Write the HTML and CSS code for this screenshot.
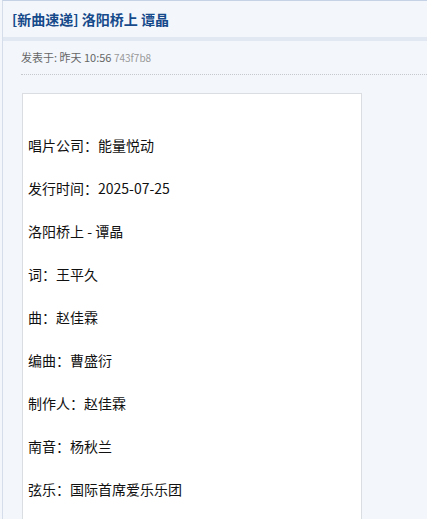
FILE: index.html
```html
<!DOCTYPE html>
<html>
  <head>
    <meta name="viewport" content="width=device-width, initial-scale=1.0" />
    <title>洛阳桥上 谭晶</title>
    <link rel="stylesheet" href="styles.css">
  </head>
  <body>
    <div class="page">
      <div class="thread-title">
        <h1>[新曲速递] 洛阳桥上 谭晶</h1>
      </div>
      <div class="post">
        <div class="post-meta">
          发表于: 昨天 10:56 <span class="post-id">743f7b8</span>
        </div>
        <div class="post-body">
          <p>唱片公司：能量悦动</p>
          <p>发行时间：2025-07-25</p>
          <p>洛阳桥上 - 谭晶</p>
          <p>词：王平久</p>
          <p>曲：赵佳霖</p>
          <p>编曲：曹盛衍</p>
          <p>制作人：赵佳霖</p>
          <p>南音：杨秋兰</p>
          <p>弦乐：国际首席爱乐乐团</p>
        </div>
      </div>
    </div>
  </body>
</html>
```

FILE: styles.css
```css
body {
  margin: 0;
  background: #f3f7fc;
  font-family: "Noto Sans CJK SC", "Noto Sans", sans-serif;
  overflow: hidden;
}

.page {
  margin-left: 2px;
  border-left: 1px solid #d5dcea;
  border-top: 1px solid #c5d1e4;
  height: 518px;
  overflow: hidden;
}

.thread-title {
  height: 36px;
  display: flex;
  align-items: center;
  padding-left: 9px;
  border-bottom: 4px solid #e2e8f2;
}

.thread-title h1 {
  margin: 0;
  font-size: 14px;
  font-weight: bold;
  color: #164a8a;
}

.post {
  padding-left: 18px;
}

.post-meta {
  font-size: 11px;
  color: #666;
  padding: 8px 0 9px 0;
  border-bottom: 1px dotted #c4c9d0;
}

.post-id {
  font-size: 10px;
  color: #999;
}

.post-body {
  margin-top: 18px;
  margin-left: 1px;
  width: 340px;
  background: #fff;
  border: 1px solid #dadde2;
  padding: 30px 0 0 5px;
  box-sizing: border-box;
  height: 460px;
}

.post-body p {
  margin: 0;
  font-size: 14px;
  line-height: 43px;
  color: #111;
}
```
